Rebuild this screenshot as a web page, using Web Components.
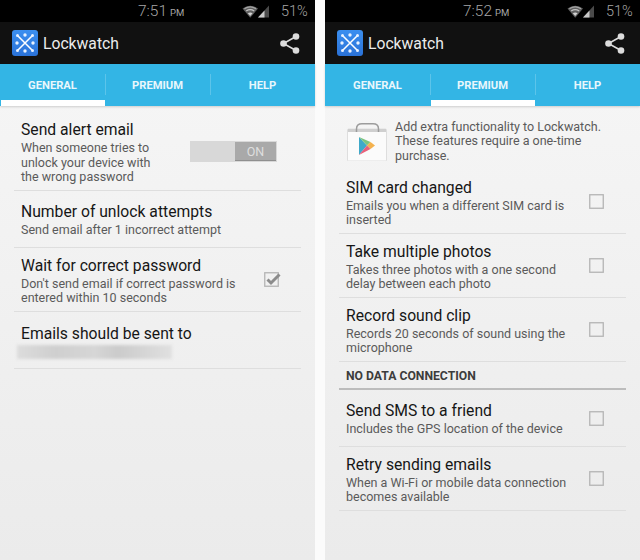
<!DOCTYPE html>
<html>
<head>
<meta charset="utf-8">
<title>Lockwatch</title>
<style>
  html, body { margin: 0; height: 560px; overflow: hidden; background: #fbfbfb; font-family: Roboto, "Liberation Sans", sans-serif; }
  #page { display: flex; gap: 10px; height: 560px; }
</style>
</head>
<body>
<div id="page">
  <phone-screen time="7:51" active="0">
    <div style="height:6.5px"></div>
    <pref-row title="Send alert email">
      When someone tries to<br>unlock your device with<br>the wrong password
      <on-switch slot="widget"></on-switch>
    </pref-row>
    <pref-row title="Number of unlock attempts">Send email after 1 incorrect attempt</pref-row>
    <pref-row title="Wait for correct password">
      Don't send email if correct password is<br>entered within 10 seconds
      <check-box slot="widget" checked></check-box>
    </pref-row>
    <pref-row title="Emails should be sent to"><blurred-line></blurred-line></pref-row>
  </phone-screen>

  <phone-screen time="7:52" active="1">
    <promo-block>Add extra functionality to Lockwatch.<br>These features require a one-time<br>purchase.</promo-block>
    <pref-row title="SIM card changed">
      Emails you when a different SIM card is<br>inserted
      <check-box slot="widget"></check-box>
    </pref-row>
    <pref-row title="Take multiple photos">
      Takes three photos with a one second<br>delay between each photo
      <check-box slot="widget"></check-box>
    </pref-row>
    <pref-row title="Record sound clip">
      Records 20 seconds of sound using the<br>microphone
      <check-box slot="widget"></check-box>
    </pref-row>
    <pref-category>NO DATA CONNECTION</pref-category>
    <pref-row title="Send SMS to a friend">
      Includes the GPS location of the device
      <check-box slot="widget"></check-box>
    </pref-row>
    <pref-row title="Retry sending emails">
      When a Wi-Fi or mobile data connection<br>becomes available
      <check-box slot="widget"></check-box>
    </pref-row>
  </phone-screen>
</div>

<script>
class StatusBar extends HTMLElement {
  connectedCallback() {
    this.attachShadow({mode: 'open'}).innerHTML = `
      <style>
        :host { display: flex; align-items: center; height: 22px; background: #000; color: #a6a6a6; font-size: 15.5px; font-weight: 300; padding-left: 138px; box-sizing: border-box; }
        small { font-size: 9.5px; font-weight: 400; margin-left: 3px; padding-top: 2px; }
        svg { margin-left: auto; display: block; }
        .pct { width: 25px; margin: 0 9px 0 11px; white-space: nowrap; font-size: 14.5px; }
      </style>
      <span>${this.getAttribute('time')}</span><small>PM</small>
      <svg width="28" height="13" viewBox="0 0 28 13" style="margin-top:1px">
        <path d="M0.5 3.6 Q8.2 -2 16 3.6 L8.2 12.8Z" fill="#5f5f5f"/>
        <path d="M2.4 3.8 Q8.2 0 14 3.8" fill="none" stroke="#a5a5a5" stroke-width="1.3"/>
        <path d="M4.2 6 Q8.2 3.4 12.2 6" fill="none" stroke="#c4c4c4" stroke-width="1.3"/>
        <path d="M5.8 8.2 Q8.2 6.6 10.6 8.2 L8.2 11Z" fill="#d0d0d0"/>
        <path d="M16 12.6 L27 0.4 V12.6Z" fill="#4a4a4a"/>
        <path d="M16 12.6 L22.5 5.4 V12.6Z" fill="#c8c8c8"/>
      </svg>
      <span class="pct">51%</span>
    `;
  }
}
customElements.define('status-bar', StatusBar);

class AppIcon extends HTMLElement {
  connectedCallback() {
    this.attachShadow({mode: 'open'}).innerHTML = `
      <style>:host { display: block; width: 26px; height: 26px; } svg { display: block; }</style>
      <svg width="26" height="26" viewBox="0 0 26 26">
        <defs><linearGradient id="b" x1="0" y1="0" x2="0" y2="1"><stop offset="0" stop-color="#3b8ff0"/><stop offset="1" stop-color="#2a72d8"/></linearGradient></defs>
        <rect width="26" height="26" rx="3" fill="url(#b)"/>
        <path d="M6 6 L20 20 M20 6 L6 20" stroke="#fff" stroke-width="1.5" fill="none"/>
        <g fill="#e8f2ff">
          <circle cx="5.5" cy="5.5" r="1.5"/><circle cx="13" cy="5" r="1.7"/><circle cx="20.5" cy="5.5" r="1.5"/>
          <circle cx="5" cy="13" r="1.7"/><circle cx="21" cy="13" r="1.7"/>
          <circle cx="5.5" cy="20.5" r="1.5"/><circle cx="13" cy="21" r="1.7"/><circle cx="20.5" cy="20.5" r="1.5"/>
        </g>
      </svg>
    `;
  }
}
customElements.define('app-icon', AppIcon);

class ActionBar extends HTMLElement {
  connectedCallback() {
    this.attachShadow({mode: 'open'}).innerHTML = `
      <style>
        :host { display: flex; align-items: center; height: 42px; background: #111; color: #ececec; padding: 0 15px 0 12px; box-sizing: border-box; }
        span { margin-left: 5px; font-size: 15.7px; }
        svg { margin-left: auto; display: block; }
      </style>
      <app-icon></app-icon>
      <span>Lockwatch</span>
      <svg width="20" height="21" viewBox="0 0 20 21">
        <path d="M3.5 10.5 L16 3.5 M3.5 10.5 L16 17.5" stroke="#dcdcdc" stroke-width="1.5" fill="none"/>
        <circle cx="3.5" cy="10.5" r="3.3" fill="#dcdcdc"/>
        <circle cx="16" cy="3.5" r="3.3" fill="#dcdcdc"/>
        <circle cx="16" cy="17.5" r="3.3" fill="#dcdcdc"/>
      </svg>
    `;
  }
}
customElements.define('action-bar', ActionBar);

class TabStrip extends HTMLElement {
  connectedCallback() {
    const active = +this.getAttribute('active');
    const tabs = ['GENERAL', 'PREMIUM', 'HELP'].map((t, i) =>
      `<div class="tab ${i == active ? 'on' : ''}">${t}</div>`).join('');
    this.attachShadow({mode: 'open'}).innerHTML = `
      <style>
        :host { display: grid; grid-template-columns: 105px 105px 105px; height: 42px; background: #33b5e5; box-shadow: 0 1px 2px rgba(0,0,0,.16); position: relative; }
        .tab { display: flex; align-items: center; justify-content: center; color: #e9f7fc; font-size: 11.2px; font-weight: 700; padding-top: 1px; position: relative; }
        .tab + .tab::before { content: ''; position: absolute; left: 0; top: 10px; height: 21px; width: 1px; background: #5cc4ea; }
        .on::after { content: ''; position: absolute; left: 1px; right: 0; top: 36px; height: 6px; background: #fff; }
      </style>
      ${tabs}
    `;
  }
}
customElements.define('tab-strip', TabStrip);

class PrefRow extends HTMLElement {
  connectedCallback() {
    this.attachShadow({mode: 'open'}).innerHTML = `
      <style>
        :host { display: flex; align-items: center; min-height: 57px; box-sizing: border-box; padding: 6.5px 0 5.5px 7px; border-bottom: 1px solid #dedede; }
        .text { flex: 1; min-width: 0; }
        .title { font-size: 15.7px; line-height: 22px; color: #161616; }
        .sum { font-size: 12.5px; line-height: 14.5px; color: #5a5a5a; }
        ::slotted(check-box) { margin-right: 21px; }
        ::slotted(on-switch) { margin-right: 24px; }
      </style>
      <div class="text">
        <div class="title">${this.getAttribute('title')}</div>
        <div class="sum"><slot></slot></div>
      </div>
      <slot name="widget"></slot>
    `;
  }
}
customElements.define('pref-row', PrefRow);

class CheckBox extends HTMLElement {
  connectedCallback() {
    const tick = this.hasAttribute('checked')
      ? '<path d="M3.5 7.5 L7 11 L15.5 2.5" fill="none" stroke="#8c8c8c" stroke-width="3"/>' : '';
    this.attachShadow({mode: 'open'}).innerHTML = `
      <style>:host { display: block; width: 16px; height: 16px; } svg { display: block; overflow: visible; }</style>
      <svg width="16" height="16" viewBox="0 0 16 16">
        <rect x="0.75" y="0.75" width="13.5" height="13.5" fill="none" stroke="#b4b4b4" stroke-width="1.3"/>
        ${tick}
      </svg>
    `;
  }
}
customElements.define('check-box', CheckBox);

class OnSwitch extends HTMLElement {
  connectedCallback() {
    this.attachShadow({mode: 'open'}).innerHTML = `
      <style>
        :host { display: flex; justify-content: flex-end; width: 87px; height: 21px; box-sizing: border-box; padding: 1px; background: #d8d8d8; }
        div { width: 41px; box-sizing: border-box; background: #a9a9a9; border-bottom: 1px solid #8f8f8f; color: #dedede; font-size: 12.5px; text-align: center; line-height: 19px; }
      </style>
      <div>ON</div>
    `;
  }
}
customElements.define('on-switch', OnSwitch);

class BlurredLine extends HTMLElement {
  connectedCallback() {
    this.attachShadow({mode: 'open'}).innerHTML = `
      <style>
        :host { display: block; width: 155px; height: 14px; margin-left: -4px; background: linear-gradient(90deg, #dcdcdc, #cfcfcf 25%, #d6d6d6 50%, #cbcbcb 65%, #e0e0e0 100%); filter: blur(1.8px); }
      </style>
    `;
  }
}
customElements.define('blurred-line', BlurredLine);

class PlayBag extends HTMLElement {
  connectedCallback() {
    this.attachShadow({mode: 'open'}).innerHTML = `
      <style>:host { display: block; width: 40px; height: 38px; } svg { display: block; }</style>
      <svg width="40" height="38" viewBox="0 0 40 38">
        <rect x="0.5" y="6" width="39" height="32" rx="1" fill="#fbfbfb" stroke="#dedede"/>
        <rect x="1" y="6" width="38" height="3" fill="#cfcfcf"/>
        <path d="M9.5 9 V6 Q9.5 0.8 15 0.8 H26 Q31.5 0.8 31.5 6 V9" fill="none" stroke="#9c9c9c" stroke-width="1.5"/>
        <path d="M12 14 L20 22.5 L12 32Z" fill="#3fa9c9"/>
        <path d="M12 14 L23.5 19 L20 22.5Z" fill="#7cc47f"/>
        <path d="M23.5 19 L28 22.5 L23.5 26 L20 22.5Z" fill="#f4b24e"/>
        <path d="M12 32 L20 22.5 L23.5 26Z" fill="#e8607a"/>
      </svg>
    `;
  }
}
customElements.define('play-bag', PlayBag);

class PromoBlock extends HTMLElement {
  connectedCallback() {
    this.attachShadow({mode: 'open'}).innerHTML = `
      <style>
        :host { display: flex; gap: 8px; height: 64px; box-sizing: border-box; padding: 13.5px 0 0 8px; color: #5a5a5a; font-size: 12.5px; line-height: 14.5px; }
        play-bag { margin-top: 3px; }
      </style>
      <play-bag></play-bag>
      <div><slot></slot></div>
    `;
  }
}
customElements.define('promo-block', PromoBlock);

class PrefCategory extends HTMLElement {
  connectedCallback() {
    this.attachShadow({mode: 'open'}).innerHTML = `
      <style>
        :host { display: block; box-sizing: border-box; height: 28px; padding: 7px 0 0 7px; border-bottom: 2px solid #bcbcbc; color: #3c3c3c; font-size: 12.2px; font-weight: 700; line-height: 15px; }
      </style>
      <slot></slot>
    `;
  }
}
customElements.define('pref-category', PrefCategory);

class PhoneScreen extends HTMLElement {
  connectedCallback() {
    this.attachShadow({mode: 'open'}).innerHTML = `
      <style>
        :host { display: flex; flex-direction: column; width: 315px; height: 560px; background: linear-gradient(#f7f7f7, #ebebeb); }
        .list { padding: 0 14px; }
      </style>
      <status-bar time="${this.getAttribute('time')}"></status-bar>
      <action-bar></action-bar>
      <tab-strip active="${this.getAttribute('active')}"></tab-strip>
      <div class="list"><slot></slot></div>
    `;
  }
}
customElements.define('phone-screen', PhoneScreen);
</script>
</body>
</html>
